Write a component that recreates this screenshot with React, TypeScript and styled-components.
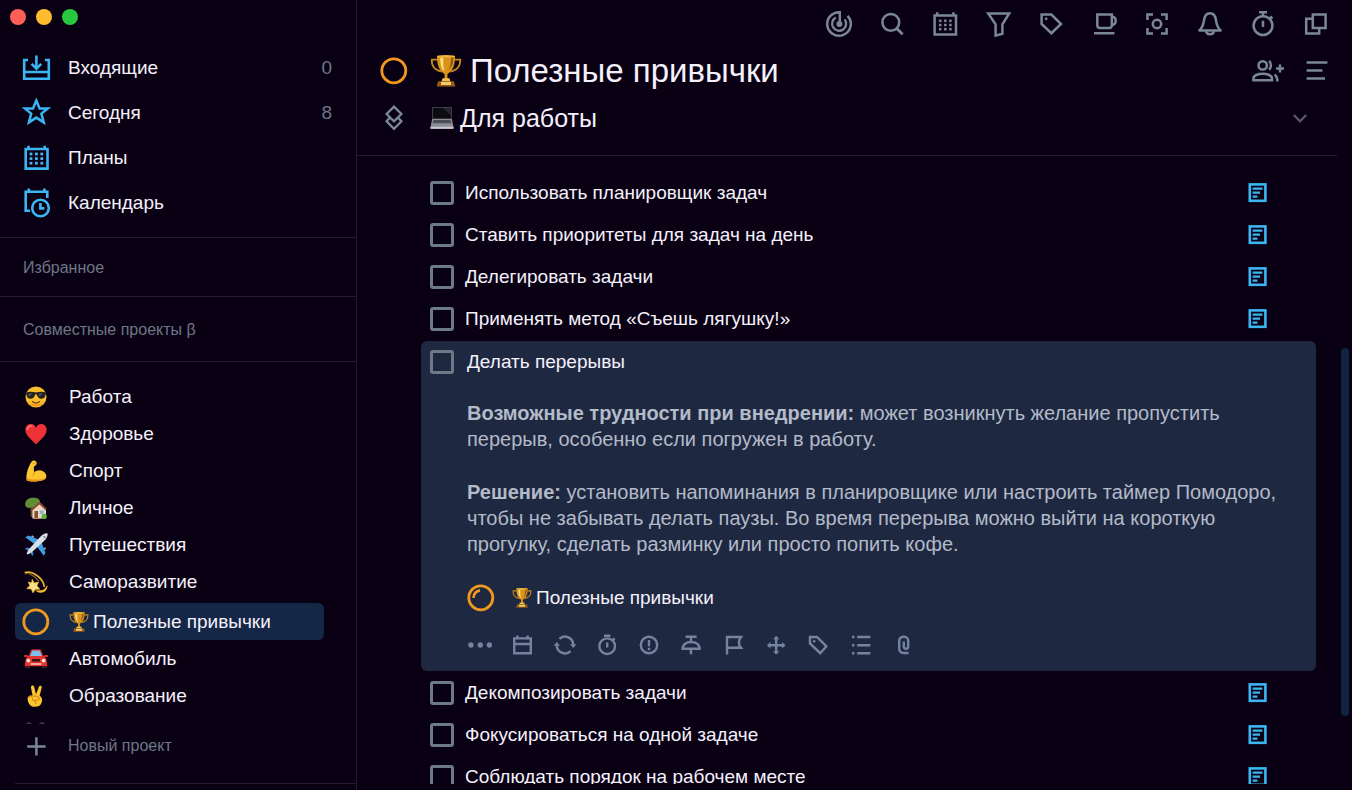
import React from "react";
import styled, { createGlobalStyle, css } from "styled-components";

const c = {
  bg: "#0a0014",
  text: "#f4f1fb",
  muted: "#7a8896",
  dim: "#6d7785",
  line: "#201c2d",
  cyan: "#3ab6f3",
  card: "#1f2841",
  selected: "#142747",
  orange: "#f2981f",
  cardIcon: "#7683a0",
  note: "#b3bac8",
};

const GlobalStyle = createGlobalStyle`
  *, *::before, *::after { box-sizing: border-box; }
  html, body, #root { height: 100%; }
  body {
    margin: 0;
    background: ${c.bg};
    color: ${c.text};
    font-family: "Liberation Sans", Arial, Helvetica, sans-serif;
    font-size: 19px;
    line-height: 24px;
    overflow: hidden;
  }
  button { font: inherit; color: inherit; background: none; border: 0; padding: 0; margin: 0; cursor: pointer; }
  h1, h2, h3, p, ul { margin: 0; padding: 0; font-weight: 400; }
  ul { list-style: none; }
  svg { display: block; flex: none; }
`;

/* ---------- layout ---------- */

const Window = styled.div`
  display: flex;
  height: 100vh;
  overflow: hidden;
`;

const Sidebar = styled.aside`
  flex: none;
  width: 357px;
  display: flex;
  flex-direction: column;
  border-right: 1px solid ${c.line};
`;

const WindowControls = styled.div`
  flex: none;
  display: flex;
  gap: 10px;
  height: 45px;
  padding: 9px 10px;
`;

const ControlDot = styled.button<{ $color: string }>`
  width: 16px;
  height: 16px;
  border-radius: 50%;
  background: ${(p) => p.$color};
`;

const NavList = styled.ul`
  flex: none;
  padding-bottom: 12px;
  border-bottom: 1px solid ${c.line};
`;

const NavLink = styled.a`
  display: flex;
  align-items: center;
  gap: 17px;
  height: 45px;
  padding: 0 24px 0 21px;
  color: ${c.text};
  text-decoration: none;
  svg { color: ${c.cyan}; }
`;

const NavCount = styled.span`
  margin-left: auto;
  color: ${c.dim};
`;

const SectionTitle = styled.h2<{ $height: number }>`
  flex: none;
  display: flex;
  align-items: center;
  height: ${(p) => p.$height}px;
  padding: 2px 0 0 23px;
  font-size: 16px;
  color: ${c.dim};
  border-bottom: 1px solid ${c.line};
`;

const ProjectList = styled.ul`
  flex: 1;
  min-height: 0;
  overflow: hidden;
  padding: 16px 32px 0 15px;
`;

const ProjectLink = styled.a<{ $active?: boolean }>`
  display: flex;
  align-items: center;
  gap: 18px;
  height: 37px;
  padding-left: 6px;
  color: ${c.text};
  text-decoration: none;
  border-radius: 6px;
  ${(p) =>
    p.$active &&
    css`
      margin-top: 3px;
      background: ${c.selected};
    `}
`;

const IconSlot = styled.span`
  flex: none;
  width: 30px;
  display: flex;
  justify-content: center;
`;

const EmojiLabel = styled.span<{ $gap: number }>`
  display: flex;
  align-items: center;
  gap: ${(p) => p.$gap}px;
`;

const SidebarFooter = styled.div`
  flex: none;
  height: 66px;
  padding: 0 0 6px 15px;
`;

const NewProject = styled.button`
  display: flex;
  align-items: center;
  gap: 17px;
  width: 100%;
  height: 60px;
  padding: 0 6px 16px;
  font-size: 16px;
  color: ${c.dim};
  border-bottom: 1px solid ${c.line};
  svg { color: ${c.muted}; }
`;

const Main = styled.main`
  flex: 1;
  min-width: 0;
  display: flex;
  flex-direction: column;
  padding-bottom: 6px;
`;

const Toolbar = styled.div`
  flex: none;
  display: flex;
  justify-content: flex-end;
  align-items: center;
  gap: 25px;
  height: 48px;
  padding-right: 22px;
`;

const IconButton = styled.button`
  display: flex;
  justify-content: center;
  align-items: center;
  color: ${c.muted};
`;

const Header = styled.header`
  flex: none;
  margin-right: 15px;
  padding: 0 0 13px 23px;
  border-bottom: 1px solid ${c.line};
`;

const HeaderRow = styled.div<{ $height: number }>`
  display: flex;
  align-items: center;
  gap: 22px;
  height: ${(p) => p.$height}px;
`;

const HeaderIcon = styled.span`
  width: 28px;
  display: flex;
  justify-content: center;
`;

const Title = styled.h1`
  display: flex;
  align-items: center;
  gap: 8px;
  font-size: 33px;
  line-height: 40px;
`;

const Subtitle = styled.h2`
  display: flex;
  align-items: center;
  gap: 6px;
  font-size: 25px;
  line-height: 32px;
`;

const HeaderActions = styled.div`
  display: flex;
  gap: 18px;
  margin-left: auto;
  padding-right: 6px;
`;

const CollapseButton = styled(IconButton)`
  margin-left: auto;
  padding-right: 29px;
  color: #565469;
`;

const ScrollArea = styled.div`
  flex: 1;
  min-height: 0;
  display: flex;
  gap: 25px;
  padding-right: 3px;
  overflow: hidden;
`;

const TaskList = styled.ul`
  flex: 1;
  min-width: 0;
  padding: 16px 0 0 64px;
`;

const TaskRow = styled.li`
  display: flex;
  align-items: center;
  height: 42px;
  padding: 0 48px 0 9px;
`;

const CheckLabel = styled.label<{ $gap?: number }>`
  display: flex;
  align-items: center;
  gap: ${(p) => p.$gap ?? 11}px;
`;

const Checkbox = styled.input`
  appearance: none;
  flex: none;
  width: 24px;
  height: 24px;
  margin: 0;
  border: 3px solid #6c7986;
  border-radius: 3px;
  cursor: pointer;
  &:checked { background: ${c.muted}; }
`;

const NoteButton = styled(IconButton)`
  margin-left: auto;
  color: ${c.cyan};
`;

const TaskCard = styled.li`
  margin: 1px 0;
  padding: 9px 26px 12px 9px;
  border-radius: 6px;
  background: ${c.card};
`;

const CardBody = styled.div`
  padding-left: 37px;
`;

const CardText = styled.div`
  display: flex;
  flex-direction: column;
  gap: 27px;
  padding-top: 26px;
  max-width: 820px;
  font-size: 20px;
  line-height: 26px;
  color: ${c.note};
`;

const CardProject = styled.a`
  display: flex;
  align-items: center;
  gap: 17px;
  height: 28px;
  margin-top: 27px;
  color: ${c.text};
  text-decoration: none;
`;

const CardTools = styled.div`
  display: flex;
  justify-content: space-between;
  width: 449px;
  max-width: 100%;
  margin-top: 19px;
`;

const CardToolButton = styled(IconButton)`
  width: 26px;
  height: 28px;
  color: ${c.cardIcon};
`;

const ScrollTrack = styled.div`
  flex: none;
  width: 8px;
  display: flex;
  flex-direction: column;
`;

const ScrollSpace = styled.div<{ $share: number }>`
  flex: ${(p) => p.$share} 0 0;
`;

const ScrollThumb = styled.div`
  flex: 367 0 0;
  border-radius: 4px;
  background: #10233f;
`;

/* ---------- icons ---------- */

type IconProps = { w?: number; h?: number; sw?: number; children: React.ReactNode };

const Icon = ({ w = 28, h = 28, sw = 2.5, children }: IconProps) => (
  <svg width={w} height={h} viewBox={`0 0 ${w} ${h}`} fill="none" stroke="currentColor" strokeWidth={sw} aria-hidden="true">
    {children}
  </svg>
);

const Dots = ({ xs, ys, s = 2.4 }: { xs: number[]; ys: number[]; s?: number }) => (
  <g fill="currentColor" stroke="none">
    {ys.map((y) => xs.map((x) => <rect key={`${x}-${y}`} x={x - s / 2} y={y - s / 2} width={s} height={s} />))}
  </g>
);

const InboxIcon = () => (
  <Icon w={30} h={30} sw={2.6}>
    <path d="M7 7H3.200V25.800H27.800V7H24M3.200 19H27.800M15.400 2.600V15M10.600 10.800L15.400 15.600L20.200 10.800" />
  </Icon>
);
const StarIcon = () => (
  <Icon w={30} h={30} sw={2.5}>
    <path d="M15.300 2.600L18.600 10.600H26.600L20.400 15.600L22.700 24.400L15.300 19.600L7.900 24.400L10.200 15.600L4 10.600H12Z" />
  </Icon>
);
const PlansIcon = () => (
  <Icon w={30} h={30} sw={2.6}>
    <path d="M4.700 6H26.500V25.600H4.700ZM7.500 2.800V6M23.700 2.800V6" />
    <Dots xs={[10, 15.4, 20.8]} ys={[11, 15.6, 20.2]} s={2.8} />
  </Icon>
);
const CalendarClockIcon = () => (
  <Icon w={30} h={30} sw={2.6}>
    <path d="M9 22.800H4.700V3.800H26.300V10M7.800 0.400V4M23.400 0.400V4" />
    <circle cx="19.5" cy="20" r="8.3" />
    <path d="M19.400 15V20.400H23.400" />
  </Icon>
);

const RadarIcon = () => (
  <Icon>
    <path d="M14.800 14V2.200C8 1.800 2.200 7.200 2.200 14A11.800 11.800 0 1 0 22.600 5.800" />
    <path d="M10.800 7.600A7 7 0 1 0 19.600 9.400" strokeWidth="2.300" />
    <circle cx="14.400" cy="14" r="3" fill="currentColor" stroke="none" />
  </Icon>
);
const SearchIcon = () => (
  <Icon>
    <circle cx="12.8" cy="12.4" r="8.4" />
    <path d="M18.800 18.400L24.600 24.200" strokeWidth="2.800" />
  </Icon>
);
const CalendarGridIcon = () => (
  <Icon>
    <path d="M3.600 5.400H25V24.400H3.600ZM6.200 2.200V5M22.400 2.200V5" />
    <Dots xs={[9.2, 14.3, 19.4]} ys={[10.8, 15, 19.2]} s={2.5} />
  </Icon>
);
const FilterIcon = () => (
  <Icon>
    <path d="M4.200 3.400H25.200L18.400 14.400V23.800L11.600 25.600V14.400Z" />
  </Icon>
);
const TagIcon = () => (
  <Icon>
    <path d="M4.600 4.600H14.400L24 14L14.400 23.200L4.600 14Z" />
    <circle cx="9.2" cy="8.8" r="1.4" fill="currentColor" stroke="none" />
  </Icon>
);
const CupIcon = () => (
  <Icon>
    <path d="M7.300 4.400H21.800V15.600A2.400 2.400 0 0 1 19.400 18H9.700A2.400 2.400 0 0 1 7.300 15.600ZM21.800 6.400C27 7 27 14.400 21.800 15M4 23.200H24.400" />
  </Icon>
);
const FocusIcon = () => (
  <Icon>
    <path d="M4.400 10V4.400H10M18 4.400H23.600V10M23.600 18V23.400H18M10 23.400H4.400V18" />
    <circle cx="14" cy="14" r="4.2" />
  </Icon>
);
const BellIcon = () => (
  <Icon>
    <path d="M3.400 20.400H24.600C21.400 17.600 20.600 14.800 20 10.400C19.400 5.600 17.200 3.200 14 3.200S8.600 5.600 8 10.400C7.400 14.800 6.600 17.600 3.400 20.400Z" strokeLinejoin="round" />
    <path d="M10.200 21.400C10.600 25.200 17.400 25.200 17.800 21.400" />
  </Icon>
);
const TimerIcon = () => (
  <Icon>
    <circle cx="14" cy="15.6" r="9.4" />
    <path d="M10 2.200H18M14 2.200V6M14 10.800V17M21.200 6.400L23.400 8.600" />
  </Icon>
);
const WindowsIcon = () => (
  <Icon>
    <path d="M10.800 4.400H23.600V18H10.800ZM10.800 8.800H4.200V23.400H17.200V18" />
  </Icon>
);
const AddPeopleIcon = () => (
  <Icon w={34}>
    <circle cx="11.7" cy="8.4" r="4.2" />
    <path d="M2.400 23.200V21.400C2.400 18.600 7 16.700 11.700 16.700S21 18.600 21 21.400V23.200Z" />
    <path d="M18 4C20.600 5.800 20.600 10.800 18 12.600M23.600 17.400C25.600 18.800 26.400 20.600 26.400 24.400M29 7.600V15.600M25 11.600H33" />
  </Icon>
);
const MenuIcon = () => (
  <Icon>
    <path d="M3.600 5.400H24.400M3.600 13.400H19.400M3.600 21.400H22" />
  </Icon>
);
const ChevronIcon = () => (
  <Icon w={16} h={16} sw={2.4}>
    <path d="M1.800 5L8 11.400L14.200 5" />
  </Icon>
);
const LayersIcon = () => (
  <Icon w={20} h={28} sw={2.3}>
    <path d="M10 2.600L17.400 10L10 17.400L2.600 10ZM6 13.600L2.600 17.200L10 24.800L17.400 17.200L14 13.600" />
  </Icon>
);
const PlusIcon = () => (
  <Icon w={30} h={30} sw={2.5}>
    <path d="M15.400 6.200V24.600M6.200 15.400H24.600" />
  </Icon>
);
const NoteIcon = () => (
  <Icon w={20} h={20} sw={2.6}>
    <rect x="1.8" y="1.4" width="15.6" height="16.4" />
    <path d="M4.600 5.600H14.400M4.600 9.600H12M4.600 13.600H9.400" strokeWidth="2.400" />
  </Icon>
);
const RingIcon = ({ glint }: { glint?: boolean }) => (
  <Icon w={28} h={28} sw={2.8}>
    <g stroke={c.orange}>
      <circle cx="13.8" cy="13.8" r="12" />
      {glint && <path d="M6.400 14C6.800 9.600 9.200 7 13 6.400" strokeWidth="2.600" />}
    </g>
  </Icon>
);

const cardTools: [string, React.ReactNode][] = [
  ["Ещё", <g fill="currentColor" stroke="none"><circle cx="2.9" cy="12" r="2.7" /><circle cx="12.3" cy="12" r="2.7" /><circle cx="21.4" cy="12" r="2.7" /></g>],
  ["Дата", <path d="M4.200 5.400H20.800V20.200H4.200ZM4.200 11H20.800M7.400 2.600V5M17.600 2.600V5" />],
  ["Повтор", <><path d="M6.400 5.800A8.200 8.200 0 0 1 20.200 12M17.600 18.200A8.200 8.200 0 0 1 3.800 12" /><path d="M17 11.200H23.400L20.200 15ZM0.600 12.800H7L3.800 9Z" fill="currentColor" stroke="none" /></>],
  ["Напоминание", <><circle cx="12.2" cy="13.2" r="7.8" /><path d="M9 2.800H15.400M12.200 9.600V14.400M17.800 5.400L19.600 7.200" /></>],
  ["Приоритет", <><circle cx="12" cy="12" r="8.2" /><path d="M12 7V13.200M12 14.800V17.200" /></>],
  ["Закрепить", <path d="M6.600 3.800H17.600M12 3.800V9M3.600 15.800H20.600C20.600 11.200 16.600 9 12.100 9S3.600 11.200 3.600 15.800ZM12 16V21.200" />],
  ["Флаг", <path d="M5 21.400V4H19C16 7.800 16 11.200 19 14.800H5" />],
  ["Переместить", <><path d="M12.200 4V20.400M4 12.200H20.400" /><path d="M9 6.200L12.200 2.800L15.400 6.200ZM9 18.200L12.200 21.600L15.400 18.200ZM6.400 9L3 12.200L6.400 15.400ZM18 9L21.400 12.200L18 15.400Z" fill="currentColor" stroke="none" /></>],
  ["Метка", <><path d="M4 4H11L20.400 13.400L14.200 20.200L4 10.400Z" /><circle cx="8.2" cy="8.2" r="1.3" fill="currentColor" stroke="none" /></>],
  ["Список", <path d="M3 4H5.400M8.200 4H21.400M3 12.200H5.400M8.200 12.200H21.400M3 20.200H5.400M8.200 20.200H21.400" />],
  ["Вложение", <path d="M17.600 20H12.400A4 4 0 0 1 8.200 16V7.800A4 4 0 0 1 12.200 3.800H13.200A4 4 0 0 1 17.200 7.800V13.600A2.200 2.200 0 0 1 12.800 13.600V8.400" />],
];

/* ---------- emoji drawings ---------- */

const Emoji = ({ size = 22, children }: { size?: number; children: React.ReactNode }) => (
  <svg width={size} height={size} viewBox="0 0 22 22" aria-hidden="true">
    {children}
  </svg>
);

const CoolFace = () => (
  <Emoji>
    <circle cx="11" cy="11" r="10.5" fill="#f9bd2e" />
    <path d="M2 15.500A10.500 10.500 0 0 0 20 15.500C16 19.500 6 19.500 2 15.500Z" fill="#ee9a1c" />
    <path d="M0.800 6.500C4 5.400 8 5.600 11 6.600C14 5.600 18 5.400 21.200 6.500L20.600 8.800C19.800 12.400 18 13 15.800 12.800C13.400 12.600 12.400 10.400 11.900 8.600H10.100C9.600 10.400 8.600 12.600 6.200 12.800C4 13 2.200 12.400 1.400 8.800Z" fill="#25231f" />
    <path d="M3.400 7.800L7.600 7.600L4 10.600ZM13.800 7.800L17.600 7.600L14.400 10.600Z" fill="#5a584e" />
    <path d="M7.400 15.600C9.600 17.400 12.600 17.400 14.800 15.600" stroke="#7a3f0c" strokeWidth="1.300" fill="none" strokeLinecap="round" />
  </Emoji>
);
const Heart = () => (
  <Emoji>
    <path d="M11 21.500C8 17.600 0.400 13.400 0.400 6.800C0.400 3.200 2.800 1 5.800 1C8.400 1 10.200 2.600 11 4.800C11.800 2.600 13.600 1 16.200 1C19.200 1 21.600 3.200 21.600 6.800C21.600 13.400 14 17.600 11 21.500Z" fill="#ee3338" />
    <path d="M2.400 6.400C2.600 3.800 4.600 2.600 6.800 3.200" stroke="#fb7a72" strokeWidth="1.600" fill="none" strokeLinecap="round" />
  </Emoji>
);
const Biceps = () => (
  <Emoji>
    <path d="M6.200 2.200C7 0.400 9.800 -0.200 11 1.400C12.200 2.800 11.800 4.600 10.800 5.600L9.200 6.200C8.600 8.400 8.800 10.400 9.400 12.200C11.400 10.400 15 9.600 18 11.200C21.200 12.800 22 16.200 20.800 18.200C18.400 21.600 6 22.400 1.800 20.400C0.400 15.400 3 7.200 6.200 2.200Z" fill="#fcc62f" />
    <path d="M1.800 20.400C6 22.400 18.400 21.600 20.800 18.200C17 19.800 6 20.200 1.600 18.200Z" fill="#e8921d" />
    <path d="M9.400 12.200C9.400 14 8.600 15 7.400 15.800M7.800 3.600C8.800 3 10 3.400 10.600 4.600" stroke="#dd8a18" strokeWidth="1" fill="none" />
  </Emoji>
);
const House = () => (
  <Emoji>
    <path d="M0.200 8C-0.400 3.400 4 0.200 8.600 0.800C12 0.400 15.400 2.400 15 5.600C15 9 11 10.600 8 10.200V18H5.800V10.800C3 11.200 0.600 10.400 0.200 8Z" fill="#5f8f35" />
    <path d="M5.800 10.400H8V20H5.800Z" fill="#6d4a2c" />
    <path d="M7.400 12L14.400 6L21 12V21.400H7.400Z" fill="#eadbc0" />
    <path d="M5.800 12.400L14.400 4.600L21.800 12L20.400 13.200L14.400 7.400L7.400 13.600Z" fill="#8d4a37" />
    <path d="M9.400 14H13V21.400H9.400Z" fill="#80523a" />
    <path d="M14.800 13.400H18.600V17H14.800Z" fill="#7fb2dc" />
    <circle cx="19.200" cy="19.400" r="2.600" fill="#5fae37" />
    <path d="M8 20.800H16V21.800H8Z" fill="#c58c73" />
  </Emoji>
);
const Plane = () => (
  <Emoji size={24}>
    <path d="M1.200 3.800L4 2.400L16.400 7L12 12Z" fill="#3f9fe0" />
    <path d="M18.200 20.800L19.600 18L15 5.600L10 10Z" fill="#3f9fe0" />
    <path d="M0.600 14.400L3 13.200L7.800 15L6.400 17.400ZM7.600 21.400L8.800 19L7 14.200L4.600 15.600Z" fill="#2b7fc6" />
    <path d="M21.600 0.400C22 2.600 20.800 4.800 18.600 7L6.600 18.200L3.200 19.800L2.400 18.800L4 15.400L15 3.400C17.200 1.200 19.400 0 21.600 0.400Z" fill="#d9dfe6" />
    <path d="M18 3L19.600 4.400" stroke="#50606f" strokeWidth="1" />
    <path d="M7 2.800L8.800 3.600M18.800 13.400L19.400 15.200" stroke="#9fb4c6" strokeWidth="1.600" />
  </Emoji>
);
const Dizzy = () => (
  <Emoji size={24}>
    <path d="M0.600 2.400C8 0 18 8 18.600 15.600" stroke="#e8b32c" strokeWidth="1.500" fill="none" />
    <path d="M0.800 3.600C4 2 10 5.600 13.400 10.200" stroke="#8f6a18" strokeWidth="1" fill="none" />
    <path d="M21.400 13.800C21.800 17.600 19.600 21 15 20.800C13 20.600 11.400 19.800 10.400 18.800L15.600 18.600C17.800 18.600 19.600 17 21.400 13.800Z" fill="#f2b92c" />
    <path d="M7.600 8.600L9.200 12L13.200 11.200L11.800 14.400L14.400 17.600L10.600 17.600L8.200 20.800L6.800 17.400L2.600 17L5.400 14.400L4 11L7 12Z" fill="#fde08a" stroke="#f0b93a" strokeWidth="0.800" />
  </Emoji>
);
const Trophy = ({ size }: { size: number }) => (
  <Emoji size={size}>
    <path d="M5 3.200H1.200C1 8 3.800 10.600 8 11.400M17 3.200H20.800C21 8 18.200 10.600 14 11.400" stroke="#c9871c" strokeWidth="1.200" fill="none" />
    <path d="M4.800 0.600H17.200C17.400 7 15.400 11.400 12 13L12 16.600H10L10 13C6.600 11.400 4.600 7 4.800 0.600Z" fill="#d9931c" />
    <path d="M7 1.800C7 6.600 8 10 10 11.400C9 8.400 9 5 9.200 1.800Z" fill="#fce07a" />
    <path d="M14.600 1.600C14.400 6 13.600 9.400 12.200 11.400L15.600 6.400L16 1.600Z" fill="#8d560d" />
    <ellipse cx="11" cy="0.900" rx="6.300" ry="0.900" fill="#f0b63b" />
    <path d="M8.600 16H13.400L14 18H8Z" fill="#f2c04a" />
    <path d="M5.600 18H16.400L17.400 21.600H4.600Z" fill="#9a5a16" />
    <path d="M7.600 18.400H14.400V20.600H7.600Z" fill="#f3cd6b" />
  </Emoji>
);
const Car = () => (
  <Emoji size={24}>
    <path d="M4 9L6 3.400C6.400 2.400 7 2 8 2H14C15 2 15.600 2.400 16 3.400L18 9Z" fill="#c32a2a" />
    <path d="M5.400 8.400L7.200 4.200C7.400 3.400 7.800 3.200 8.600 3.200H13.400C14.200 3.200 14.600 3.400 14.800 4.200L16.600 8.400Z" fill="#7fc0ea" />
    <path d="M1.400 12C1.800 9.600 3 8.400 5 8.200H17C19 8.400 20.200 9.600 20.600 12L21.400 17.600H0.600Z" fill="#e73330" />
    <path d="M0.200 7.400H3.400V9.200H0.200ZM18.600 7.400H21.800V9.200H18.600Z" fill="#d62f2c" />
    <circle cx="4" cy="12.400" r="1.700" fill="#fff0dc" />
    <circle cx="18" cy="12.400" r="1.700" fill="#fff0dc" />
    <path d="M7.400 11H14.600V13.400H7.400Z" fill="#3b1517" />
    <path d="M6 15H16V16.200H6Z" fill="#f5e3dc" />
    <path d="M1.400 17.600H5.600V19.400H1.400ZM16.400 17.600H20.600V19.400H16.400Z" fill="#3a2026" />
  </Emoji>
);
const Victory = () => (
  <Emoji>
    <path d="M6.400 1C7.600 0 9 0.600 9.200 2L11 9.200L14 1.600C14.600 0.200 16.800 0.400 16.800 2.200L14.600 10.800C16.800 12 17.600 14 16.800 17C16 20.400 13.400 21.800 9.800 21.800C6 21.800 4 19.600 3 16.200C2 13.600 2.800 11.200 5 10.600L7.600 10.400L6 2.800C5.800 2 6 1.400 6.400 1Z" fill="#fcc62f" />
    <path d="M3.600 12.600C5 11 7 11 7.400 13.200L7.600 15.600M8 11.400C10 10.400 14 11.200 14.400 13.400C14.400 15.200 11 15 9.400 15.400C10.800 16.200 11 17.600 10.600 19" stroke="#d98517" strokeWidth="1.100" fill="none" />
  </Emoji>
);
const Eyes = () => (
  <Emoji size={24}>
    <path d="M0.800 5C1.800 -0.200 7.200 -0.200 8.200 5ZM12.800 5C13.800 -0.200 19.200 -0.200 20.200 5Z" fill="#3a3645" />
  </Emoji>
);
const Laptop = () => (
  <Emoji size={24}>
    <path d="M2 1H20V12H2Z" fill="#4a4c52" />
    <path d="M2.800 1.800H19.200V11.400H2.800Z" fill="#0c0c10" />
    <path d="M12 1.800H19.200V9Z" fill="#24262c" />
    <path d="M2 12H20L21.600 19.600H0.400Z" fill="#8d8e98" />
    <path d="M3.200 12.800H18.800L19.600 15.800H2.400Z" fill="#4b4c55" />
    <path d="M0.400 19H21.600V21H0.400Z" fill="#c8c8d0" />
  </Emoji>
);

/* ---------- data ---------- */

const nav = [
  { icon: <InboxIcon />, label: "Входящие", count: "0" },
  { icon: <StarIcon />, label: "Сегодня", count: "8" },
  { icon: <PlansIcon />, label: "Планы" },
  { icon: <CalendarClockIcon />, label: "Календарь" },
];

const projects = [
  { icon: <CoolFace />, label: "Работа" },
  { icon: <Heart />, label: "Здоровье" },
  { icon: <Biceps />, label: "Спорт" },
  { icon: <House />, label: "Личное" },
  { icon: <Plane />, label: "Путешествия" },
  { icon: <Dizzy />, label: "Саморазвитие" },
  { icon: <RingIcon />, label: "Полезные привычки", active: true },
  { icon: <Car />, label: "Автомобиль" },
  { icon: <Victory />, label: "Образование" },
  { icon: <Eyes />, label: "" },
];

const toolbar: [string, React.ReactNode][] = [
  ["Обзор", <RadarIcon />],
  ["Поиск", <SearchIcon />],
  ["Календарь", <CalendarGridIcon />],
  ["Фильтр", <FilterIcon />],
  ["Метки", <TagIcon />],
  ["Перерыв", <CupIcon />],
  ["Фокус", <FocusIcon />],
  ["Уведомления", <BellIcon />],
  ["Таймер", <TimerIcon />],
  ["Новое окно", <WindowsIcon />],
];

const tasksBefore = [
  "Использовать планировщик задач",
  "Ставить приоритеты для задач на день",
  "Делегировать задачи",
  "Применять метод «Съешь лягушку!»",
];
const tasksAfter = [
  "Декомпозировать задачи",
  "Фокусироваться на одной задаче",
  "Соблюдать порядок на рабочем месте",
];

const Task = ({ label }: { label: string }) => (
  <TaskRow>
    <CheckLabel>
      <Checkbox type="checkbox" />
      <span>{label}</span>
    </CheckLabel>
    <NoteButton aria-label="Заметка">
      <NoteIcon />
    </NoteButton>
  </TaskRow>
);

export default function App() {
  return (
    <>
      <GlobalStyle />
      <Window>
        <Sidebar>
          <WindowControls>
            <ControlDot $color="#ff5f57" aria-label="Закрыть" />
            <ControlDot $color="#febc2e" aria-label="Свернуть" />
            <ControlDot $color="#28c840" aria-label="Развернуть" />
          </WindowControls>
          <NavList>
            {nav.map((n) => (
              <li key={n.label}>
                <NavLink href="#">
                  {n.icon}
                  <span>{n.label}</span>
                  {n.count && <NavCount>{n.count}</NavCount>}
                </NavLink>
              </li>
            ))}
          </NavList>
          <SectionTitle $height={59}>Избранное</SectionTitle>
          <SectionTitle $height={65}>Совместные проекты β</SectionTitle>
          <ProjectList>
            {projects.map((p, i) => (
              <li key={i}>
                <ProjectLink href="#" $active={p.active} aria-label={p.label || "Проект"}>
                  <IconSlot>{p.icon}</IconSlot>
                  {p.active ? (
                    <EmojiLabel $gap={4}>
                      <Trophy size={20} />
                      {p.label}
                    </EmojiLabel>
                  ) : (
                    <span>{p.label}</span>
                  )}
                </ProjectLink>
              </li>
            ))}
          </ProjectList>
          <SidebarFooter>
            <NewProject>
              <PlusIcon />
              Новый проект
            </NewProject>
          </SidebarFooter>
        </Sidebar>

        <Main>
          <Toolbar>
            {toolbar.map(([label, icon]) => (
              <IconButton key={label} aria-label={label}>
                {icon}
              </IconButton>
            ))}
          </Toolbar>
          <Header>
            <HeaderRow $height={46}>
              <HeaderIcon>
                <RingIcon />
              </HeaderIcon>
              <Title>
                <Trophy size={32} />
                Полезные привычки
              </Title>
              <HeaderActions>
                <IconButton aria-label="Добавить участников">
                  <AddPeopleIcon />
                </IconButton>
                <IconButton aria-label="Меню">
                  <MenuIcon />
                </IconButton>
              </HeaderActions>
            </HeaderRow>
            <HeaderRow $height={48}>
              <HeaderIcon>
                <IconButton as="span">
                  <LayersIcon />
                </IconButton>
              </HeaderIcon>
              <Subtitle>
                <Laptop />
                Для работы
              </Subtitle>
              <CollapseButton aria-label="Свернуть раздел">
                <ChevronIcon />
              </CollapseButton>
            </HeaderRow>
          </Header>
          <ScrollArea>
            <TaskList>
              {tasksBefore.map((t) => (
                <Task key={t} label={t} />
              ))}
              <TaskCard>
                <CheckLabel $gap={13}>
                  <Checkbox type="checkbox" />
                  <span>Делать перерывы</span>
                </CheckLabel>
                <CardBody>
                  <CardText>
                    <p>
                      <b>Возможные трудности при внедрении:</b> может возникнуть желание пропустить перерыв, особенно
                      если погружен в работу.
                    </p>
                    <p>
                      <b>Решение:</b> установить напоминания в планировщике или настроить таймер Помодоро, чтобы не
                      забывать делать паузы. Во время перерыва можно выйти на короткую прогулку, сделать разминку или
                      просто попить кофе.
                    </p>
                  </CardText>
                  <CardProject href="#">
                    <RingIcon glint />
                    <EmojiLabel $gap={4}>
                      <Trophy size={20} />
                      Полезные привычки
                    </EmojiLabel>
                  </CardProject>
                  <CardTools>
                    {cardTools.map(([label, drawing]) => (
                      <CardToolButton key={label} aria-label={label}>
                        <Icon w={24} h={24} sw={2.4}>
                          {drawing}
                        </Icon>
                      </CardToolButton>
                    ))}
                  </CardTools>
                </CardBody>
              </TaskCard>
              {tasksAfter.map((t) => (
                <Task key={t} label={t} />
              ))}
            </TaskList>
            <ScrollTrack>
              <ScrollSpace $share={192} />
              <ScrollThumb />
              <ScrollSpace $share={68} />
            </ScrollTrack>
          </ScrollArea>
        </Main>
      </Window>
    </>
  );
}
